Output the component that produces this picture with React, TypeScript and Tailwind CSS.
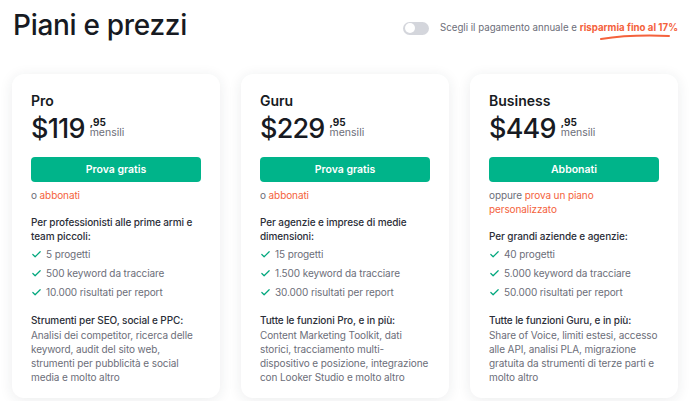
import { Check } from "lucide-react";

type Plan = {
  name: string;
  price: string;
  cta: string;
  note: React.ReactNode;
  audience: string;
  limits: string[];
  toolsTitle: string;
  tools: string;
};

const plans: Plan[] = [
  {
    name: "Pro",
    price: "$119",
    cta: "Prova gratis",
    note: (
      <>
        o <span className="text-[#f4623c]">abbonati</span>
      </>
    ),
    audience: "Per professionisti alle prime armi e team piccoli:",
    limits: ["5 progetti", "500 keyword da tracciare", "10.000 risultati per report"],
    toolsTitle: "Strumenti per SEO, social e PPC:",
    tools:
      "Analisi dei competitor, ricerca delle keyword, audit del sito web, strumenti per pubblicità e social media e molto altro",
  },
  {
    name: "Guru",
    price: "$229",
    cta: "Prova gratis",
    note: (
      <>
        o <span className="text-[#f4623c]">abbonati</span>
      </>
    ),
    audience: "Per agenzie e imprese di medie dimensioni:",
    limits: ["15 progetti", "1.500 keyword da tracciare", "30.000 risultati per report"],
    toolsTitle: "Tutte le funzioni Pro, e in più:",
    tools:
      "Content Marketing Toolkit, dati storici, tracciamento multi-dispositivo e posizione, integrazione con Looker Studio e molto altro",
  },
  {
    name: "Business",
    price: "$449",
    cta: "Abbonati",
    note: (
      <>
        oppure <span className="text-[#f4623c]">prova un piano personalizzato</span>
      </>
    ),
    audience: "Per grandi aziende e agenzie:",
    limits: ["40 progetti", "5.000 keyword da tracciare", "50.000 risultati per report"],
    toolsTitle: "Tutte le funzioni Guru, e in più:",
    tools:
      "Share of Voice, limiti estesi, accesso alle API, analisi PLA, migrazione gratuita da strumenti di terze parti e molto altro",
  },
];

function PlanCard({ plan }: { plan: Plan }) {
  return (
    <div className="w-[208px] shrink-0 rounded-[12px] bg-white px-[19px] pt-[18px] pb-[14px] shadow-[0_2px_14px_rgba(30,40,60,0.09)]">
      <div className="text-[14px] font-semibold leading-[17px] text-[#171a22]">{plan.name}</div>
      <div className="mt-[5px] flex items-start">
        <span className="text-[27px] font-medium leading-[30px] tracking-[-0.8px] text-[#171a22]">
          {plan.price}
        </span>
        <div className="ml-[5px] mt-[3px] flex flex-col">
          <span className="text-[10px] font-bold leading-[10px] text-[#171a22]">,95</span>
          <span className="text-[10.5px] leading-[12px] text-[#6c6e79]">mensili</span>
        </div>
      </div>
      <button className="mt-[13px] flex h-[25px] w-full items-center justify-center rounded-[4px] bg-[#00b48a] text-[10.5px] font-semibold text-white">
        {plan.cta}
      </button>
      <div className="tracking-[-0.1px]">
        <div className="mt-[6px] text-[10px] leading-[14px] text-[#6c6e79]">{plan.note}</div>
        <div className="mt-[13px] text-[10px] font-medium leading-[14px] text-[#2b2e38]">{plan.audience}</div>
        <ul className="mt-[2px] flex flex-col">
          {plan.limits.map((l) => (
            <li key={l} className="flex h-[19px] items-center gap-[4px] text-[10px] text-[#6c6e79]">
              <Check size={11} strokeWidth={2.6} className="text-[#00a77d]" />
              {l}
            </li>
          ))}
        </ul>
        <div className="mt-[11px] text-[10px] font-medium leading-[14px] text-[#2b2e38]">{plan.toolsTitle}</div>
        <div className="mt-[1px] text-[10px] leading-[14px] text-[#6c6e79]">{plan.tools}</div>
      </div>
    </div>
  );
}

export default function App() {
  return (
    <div
      className="h-[401px] w-[700px] overflow-hidden bg-white"
      style={{ fontFamily: "Inter, 'Noto Sans', sans-serif" }}
    >
      <div className="flex items-start justify-between pl-[13px] pr-[22px] pt-[7px]">
        <h1 className="text-[28px] font-medium leading-[36px] tracking-[-0.3px] text-[#171a22]">
          Piani e prezzi
        </h1>
        <div className="mt-[14px] flex items-center">
          <div className="flex h-[13px] w-[26px] items-center rounded-full bg-[#d4d6dc] px-[1.5px]">
            <div className="h-[10px] w-[10px] rounded-full bg-white" />
          </div>
          <div className="relative ml-[11px] text-[9.7px] leading-[14px] text-[#6c6e79]">
            Scegli il pagamento annuale e{" "}
            <span className="font-bold text-[#f4623c]">risparmia fino al 17%</span>
            <svg
              className="absolute right-[8px] top-[13px]"
              width="70"
              height="6"
              viewBox="0 0 70 6"
              fill="none"
            >
              <path d="M1 5 C 20 2, 45 1, 69 2" stroke="#f4623c" strokeWidth="2" strokeLinecap="round" />
            </svg>
          </div>
        </div>
      </div>
      <div className="mt-[31px] flex gap-[21px] pl-[12px]">
        {plans.map((p) => (
          <PlanCard key={p.name} plan={p} />
        ))}
      </div>
    </div>
  );
}
